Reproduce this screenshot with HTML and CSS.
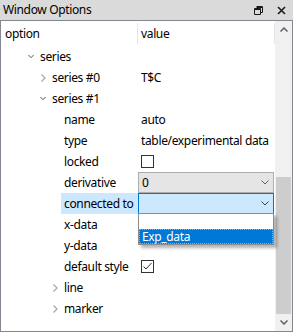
FILE: index.html
```html
<!DOCTYPE html>
<html>
<head>
<meta charset="utf-8">
<link rel="stylesheet" href="styles.css">
</head>
<body>
<div class="window">
  <div class="titlebar">
    <span class="title">Window Options</span>
    <span class="tb-icons">
      <svg class="tb-restore" width="9" height="9" viewBox="0 0 9 9"><path d="M2.5 0.5h6v6h-2M0.5 2.5h6v6h-6z M0.5 3.5h6 M2.5 1.5h6" fill="none" stroke="#1a1a1a" stroke-width="1"/></svg>
      <svg class="tb-close" width="9" height="9" viewBox="0 0 9 9"><path d="M1 1L8 8M8 1L1 8" stroke="#1a1a1a" stroke-width="1.6"/></svg>
    </span>
  </div>
  <div class="content">
    <div class="tree">
      <div class="row header"><div class="name hname">option</div><div class="val hval">value</div></div>
      <div class="row"><div class="name l1"><span class="tw"><svg width="8" height="5" viewBox="0 0 8 5"><path d="M0.5 0.5L4 4L7.5 0.5" fill="none" stroke="#444" stroke-width="1.2"/></svg></span><span class="lbl">series</span></div><div class="val"></div></div>
      <div class="row"><div class="name l2"><span class="tw"><svg width="5" height="8" viewBox="0 0 5 8"><path d="M0.5 0.5L4 4L0.5 7.5" fill="none" stroke="#a6a6a6" stroke-width="1.2"/></svg></span><span class="lbl">series #0</span></div><div class="val"><span class="vtext">T$C</span></div></div>
      <div class="row"><div class="name l2"><span class="tw"><svg width="8" height="5" viewBox="0 0 8 5"><path d="M0.5 0.5L4 4L7.5 0.5" fill="none" stroke="#444" stroke-width="1.2"/></svg></span><span class="lbl">series #1</span></div><div class="val"></div></div>
      <div class="row"><div class="name l3"><span class="tw"></span><span class="lbl">name</span></div><div class="val"><span class="vtext">auto</span></div></div>
      <div class="row"><div class="name l3"><span class="tw"></span><span class="lbl">type</span></div><div class="val"><span class="vtext">table/experimental data</span></div></div>
      <div class="row"><div class="name l3"><span class="tw"></span><span class="lbl">locked</span></div><div class="val"><span class="check"></span></div></div>
      <div class="row"><div class="name l3"><span class="tw"></span><span class="lbl">derivative</span></div><div class="val"><div class="combo"><span class="ctext">0</span><svg class="carrow" width="8" height="5" viewBox="0 0 8 5"><path d="M0.5 0.5L4 4L7.5 0.5" fill="none" stroke="#606060" stroke-width="1"/></svg></div></div></div>
      <div class="row"><div class="name l3"><span class="tw"></span><span class="lbl sel">connected to</span></div><div class="val dropwrap"><div class="combo active"><span class="ctext"></span><svg class="carrow" width="8" height="5" viewBox="0 0 8 5"><path d="M0.5 0.5L4 4L7.5 0.5" fill="none" stroke="#404040" stroke-width="1"/></svg></div>
        <div class="droplist"><div class="ditem"></div><div class="ditem hi">Exp_data</div></div></div></div>
      <div class="row"><div class="name l3"><span class="tw"></span><span class="lbl">x-data</span></div><div class="val"></div></div>
      <div class="row"><div class="name l3"><span class="tw"></span><span class="lbl">y-data</span></div><div class="val"></div></div>
      <div class="row"><div class="name l3"><span class="tw"></span><span class="lbl">default style</span></div><div class="val"><span class="check"><svg width="11" height="11" viewBox="0 0 11 11"><path d="M1.5 5.5L4 8L9.5 2" fill="none" stroke="#333" stroke-width="1"/></svg></span></div></div>
      <div class="row"><div class="name l3b"><span class="tw"><svg width="5" height="8" viewBox="0 0 5 8"><path d="M0.5 0.5L4 4L0.5 7.5" fill="none" stroke="#a6a6a6" stroke-width="1.2"/></svg></span><span class="lbl">line</span></div><div class="val"></div></div>
      <div class="row"><div class="name l3b"><span class="tw"><svg width="5" height="8" viewBox="0 0 5 8"><path d="M0.5 0.5L4 4L0.5 7.5" fill="none" stroke="#a6a6a6" stroke-width="1.2"/></svg></span><span class="lbl">marker</span></div><div class="val"></div></div>
    </div>
    <div class="scrollbar">
      <div class="sbtn"><svg width="8" height="5" viewBox="0 0 8 5"><path d="M0.5 4.5L4 1L7.5 4.5" fill="none" stroke="#606060" stroke-width="1.5"/></svg></div>
      <div class="track"><div class="thumb"></div></div>
      <div class="sbtn"><svg width="8" height="5" viewBox="0 0 8 5"><path d="M0.5 0.5L4 4L7.5 0.5" fill="none" stroke="#606060" stroke-width="1.5"/></svg></div>
    </div>
  </div>
</div>
</body>
</html>
```

FILE: styles.css
```css
html, body {
  margin: 0;
  padding: 0;
  background: #ffffff;
}
body {
  width: 293px;
  height: 332px;
  overflow: hidden;
  font-family: "Noto Sans", "Open Sans", sans-serif;
  font-size: 12px;
  letter-spacing: -0.35px;
  color: #000;
  white-space: nowrap;
}
.window {
  width: 293px;
  height: 332px;
  box-sizing: border-box;
  display: flex;
  flex-direction: column;
}
.titlebar {
  height: 20px;
  background: #dadada;
  display: flex;
  align-items: center;
  justify-content: space-between;
  padding: 0 7px 0 3px;
  flex: none;
}
.title {
  font-size: 12px;
  line-height: 20px;
  color: #000;
}
.tb-icons {
  display: flex;
  align-items: center;
  gap: 14px;
}
.content {
  flex: 1;
  display: flex;
  border: 1px solid #828790;
  min-height: 0;
}
.tree {
  flex: 1;
  display: flex;
  flex-direction: column;
  background: #fff;
}
.row {
  display: grid;
  grid-template-columns: 137px 1fr;
  height: 21px;
  align-items: center;
  line-height: 21px;
}
.row.header {
  height: 25px;
  line-height: 25px;
}
.hname {
  padding-left: 4px;
  border-right: 1px solid #e5e5e5;
  height: 25px;
}
.hval {
  padding-left: 3px;
  border-right: 1px solid #e5e5e5;
  height: 25px;
}
.name {
  display: flex;
  align-items: center;
  height: 21px;
}
.l1 { padding-left: 27px; }
.l2 { padding-left: 39px; }
.l3 { padding-left: 48px; }
.l3b { padding-left: 51px; }
.tw {
  width: 12px;
  height: 21px;
  display: inline-flex;
  align-items: center;
  justify-content: center;
  padding-right: 6px;
  box-sizing: border-box;
  flex: none;
}
.l3 .lbl {
  padding: 0 3px;
}
.lbl.sel {
  background: #cce8ff;
  flex: 1;
  height: 21px;
}
.val {
  height: 21px;
  display: flex;
  align-items: center;
  position: relative;
}
.vtext {
  padding-left: 3px;
}
.check {
  margin-left: 3px;
  width: 13px;
  height: 13px;
  box-sizing: border-box;
  border: 1px solid #333;
  background: #fff;
  display: flex;
  align-items: center;
  justify-content: center;
}
.combo {
  width: 136px;
  height: 21px;
  box-sizing: border-box;
  border: 1px solid #adadad;
  background: #e5e5e5;
  display: flex;
  align-items: center;
  justify-content: space-between;
  padding: 0 4px 0 3px;
  line-height: 19px;
}
.combo.active {
  background: #cce8ff;
  border-color: #0078d7;
}
.droplist {
  position: absolute;
  left: 0;
  top: 20px;
  width: 136px;
  box-sizing: border-box;
  border: 1px solid #8c8c8c;
  background: #fff;
  box-shadow: 3px 3px 3px rgba(0, 0, 0, 0.3);
  z-index: 5;
}
.ditem {
  height: 15px;
  line-height: 15px;
  padding-left: 3px;
  box-sizing: border-box;
}
.ditem.hi {
  background: #0078d7;
  color: #fff;
  outline: 1px dotted #f0a030;
  outline-offset: -1px;
}
.scrollbar {
  width: 17px;
  flex: none;
  background: #f0f0f0;
  display: flex;
  flex-direction: column;
}
.sbtn {
  height: 17px;
  display: flex;
  align-items: center;
  justify-content: center;
  flex: none;
}
.track {
  flex: 1;
  display: flex;
  flex-direction: column;
  justify-content: flex-end;
}
.thumb {
  height: 137px;
  margin: 0 1px;
  background: #cdcdcd;
}
```
